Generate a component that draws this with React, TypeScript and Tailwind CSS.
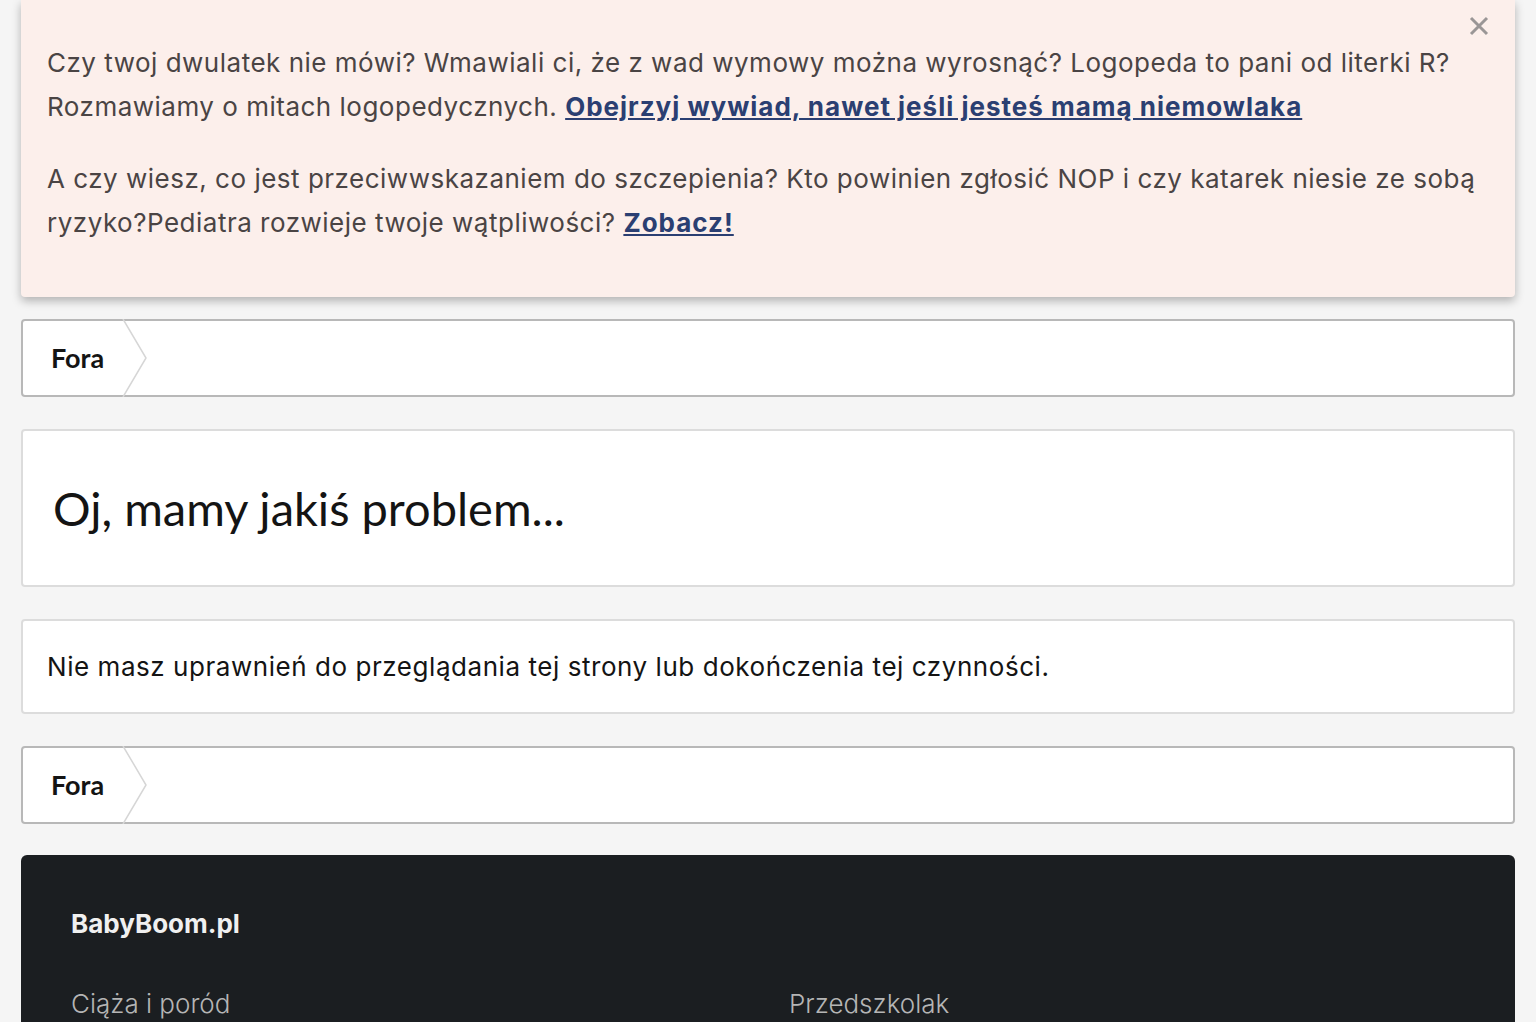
import React from 'react';

const sans = { fontFamily: 'Inter, "Noto Sans", sans-serif' };
const lato = { fontFamily: 'Lato, "Noto Sans", sans-serif' };

function Breadcrumb() {
  return (
    <div className="flex h-[78px] items-stretch rounded-[4px] border-2 border-[#b8b8b8] bg-white">
      <div className="relative flex items-center pl-[28px] pr-[19px]">
        <span style={lato} className="text-[27px] font-bold text-[#141414]">Fora</span>
        <svg className="absolute right-[-24px] top-[-2px]" width="26" height="78" viewBox="0 0 26 78">
          <polyline points="2,0 25,39 2,78" fill="none" stroke="#d6d6d6" strokeWidth="1.5" />
        </svg>
      </div>
    </div>
  );
}

export default function App() {
  return (
    <div style={sans} className="min-h-[1022px] overflow-hidden bg-[#f5f5f5] px-[21px]">
      {/* notice */}
      <div className="relative rounded-b-[4px] bg-[#fcefeb] px-[26px] pb-[24px] pt-[41px] text-[26px] leading-[44px] tracking-[0.5px] text-[#4a4444] shadow-[0_4px_10px_rgba(0,0,0,0.28)]">
        <button className="absolute right-[26px] top-[16px]">
          <svg width="20" height="20" viewBox="0 0 20 20">
            <path d="M2 2 L18 18 M18 2 L2 18" stroke="#9a9696" strokeWidth="3" />
          </svg>
        </button>
        <p className="mb-[28px]">
          Czy twoj dwulatek nie mówi? Wmawiali ci, że z wad wymowy można wyrosnąć? Logopeda to pani od literki R? Rozmawiamy o mitach logopedycznych.{' '}
          <a className="font-bold tracking-[1px] text-[#2b3f72] underline">Obejrzyj wywiad, nawet jeśli jesteś mamą niemowlaka</a>
        </p>
        <p className="mb-[28px]">
          A czy wiesz, co jest przeciwwskazaniem do szczepienia? Kto powinien zgłosić NOP i czy katarek niesie ze sobą ryzyko?Pediatra rozwieje twoje wątpliwości?{' '}
          <a className="font-bold tracking-[1px] text-[#2b3f72] underline">Zobacz!</a>
        </p>
      </div>

      <div className="mt-[22px]">
        <Breadcrumb />
      </div>

      <div className="mt-[32px] flex h-[158px] items-center rounded-[4px] border-2 border-[#dcdcdc] bg-white px-[30px]">
        <h1 style={lato} className="text-[47px] font-normal text-[#141414]">Oj, mamy jakiś problem...</h1>
      </div>

      <div className="mt-[32px] flex h-[95px] items-center rounded-[4px] border-2 border-[#dcdcdc] bg-white px-[24px]">
        <p className="text-[26px] tracking-[0.55px] text-[#141414]">Nie masz uprawnień do przeglądania tej strony lub dokończenia tej czynności.</p>
      </div>

      <div className="mt-[32px]">
        <Breadcrumb />
      </div>

      <footer className="mt-[31px] rounded-t-[6px] bg-[#1b1e21] px-[50px] pt-[51px] pb-[40px]">
        <div className="text-[26px] font-bold leading-[36px] text-[#f0f0f0]">BabyBoom.pl</div>
        <div className="mt-[44px] grid grid-cols-2 gap-x-[42px] text-[26px] font-light leading-[36px] text-[#b5b5b5]">
          <div>Ciąża i poród</div>
          <div>Przedszkolak</div>
        </div>
      </footer>
    </div>
  );
}
